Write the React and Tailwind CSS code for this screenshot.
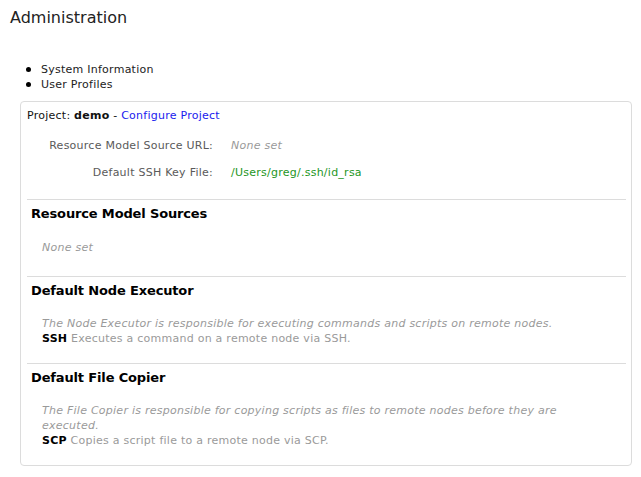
export default function App() {
  const f = { fontFamily: '"DejaVu Sans", Verdana, sans-serif' };
  return (
    <div className="bg-white w-[641px] h-[477px] text-[11px] leading-[15px] tracking-[0.25px] text-[#222]" style={f}>
      <h1 className="pl-[10px] pt-[8px] text-[16px] leading-[20px] tracking-normal text-[#222] font-normal">Administration</h1>
      <ul className="mt-[34px] flex flex-col">
        <li className="flex items-center">
          <span className="ml-[26px] w-[5px] h-[5px] rounded-full bg-black"></span>
          <span className="ml-[10px]">System Information</span>
        </li>
        <li className="flex items-center">
          <span className="ml-[26px] w-[5px] h-[5px] rounded-full bg-black"></span>
          <span className="ml-[10px]">User Profiles</span>
        </li>
      </ul>
      <div className="mt-[9px] ml-[20px] w-[612px] h-[365px] border border-[#dcdcdc] rounded-[4px] pl-[6px] pr-[5px] pt-[6px]">
        <div className="text-[#111]">
          Project: <b className="font-bold">demo</b> - <a className="text-[#1a1aee]">Configure Project</a>
        </div>
        <div className="mt-[9px] flex flex-col">
          <div className="flex h-[27px] items-center">
            <span className="w-[186px] text-right text-[#5a5a5a]">Resource Model Source URL:</span>
            <span className="ml-[18px] italic text-[#9a9a9a]">None set</span>
          </div>
          <div className="flex h-[27px] items-center">
            <span className="w-[186px] text-right text-[#5a5a5a]">Default SSH Key File:</span>
            <span className="ml-[18px] text-[#1e961e]">/Users/greg/.ssh/id_rsa</span>
          </div>
        </div>
        <div className="mt-[13px] h-px bg-[#dcdcdc]"></div>
        <h2 className="mt-[6px] pl-[4px] text-[13px] leading-[16px] tracking-[-0.15px] font-bold text-black">Resource Model Sources</h2>
        <div className="mt-[18px] pl-[15px] italic text-[#9a9a9a]">None set</div>
        <div className="mt-[21px] h-px bg-[#dcdcdc]"></div>
        <h2 className="mt-[6px] pl-[4px] text-[13px] leading-[16px] tracking-[-0.15px] font-bold text-black">Default Node Executor</h2>
        <div className="mt-[17px] pl-[15px] max-w-[555px]">
          <div className="italic text-[#9a9a9a]">The Node Executor is responsible for executing commands and scripts on remote nodes.</div>
          <div className="text-[#9a9a9a]"><b className="font-bold text-black">SSH</b> Executes a command on a remote node via SSH.</div>
        </div>
        <div className="mt-[17px] h-px bg-[#dcdcdc]"></div>
        <h2 className="mt-[6px] pl-[4px] text-[13px] leading-[16px] tracking-[-0.15px] font-bold text-black">Default File Copier</h2>
        <div className="mt-[17px] pl-[15px] max-w-[555px]">
          <div className="italic text-[#9a9a9a]">The File Copier is responsible for copying scripts as files to remote nodes before they are executed.</div>
          <div className="text-[#9a9a9a]"><b className="font-bold text-black">SCP</b> Copies a script file to a remote node via SCP.</div>
        </div>
      </div>
    </div>
  );
}
